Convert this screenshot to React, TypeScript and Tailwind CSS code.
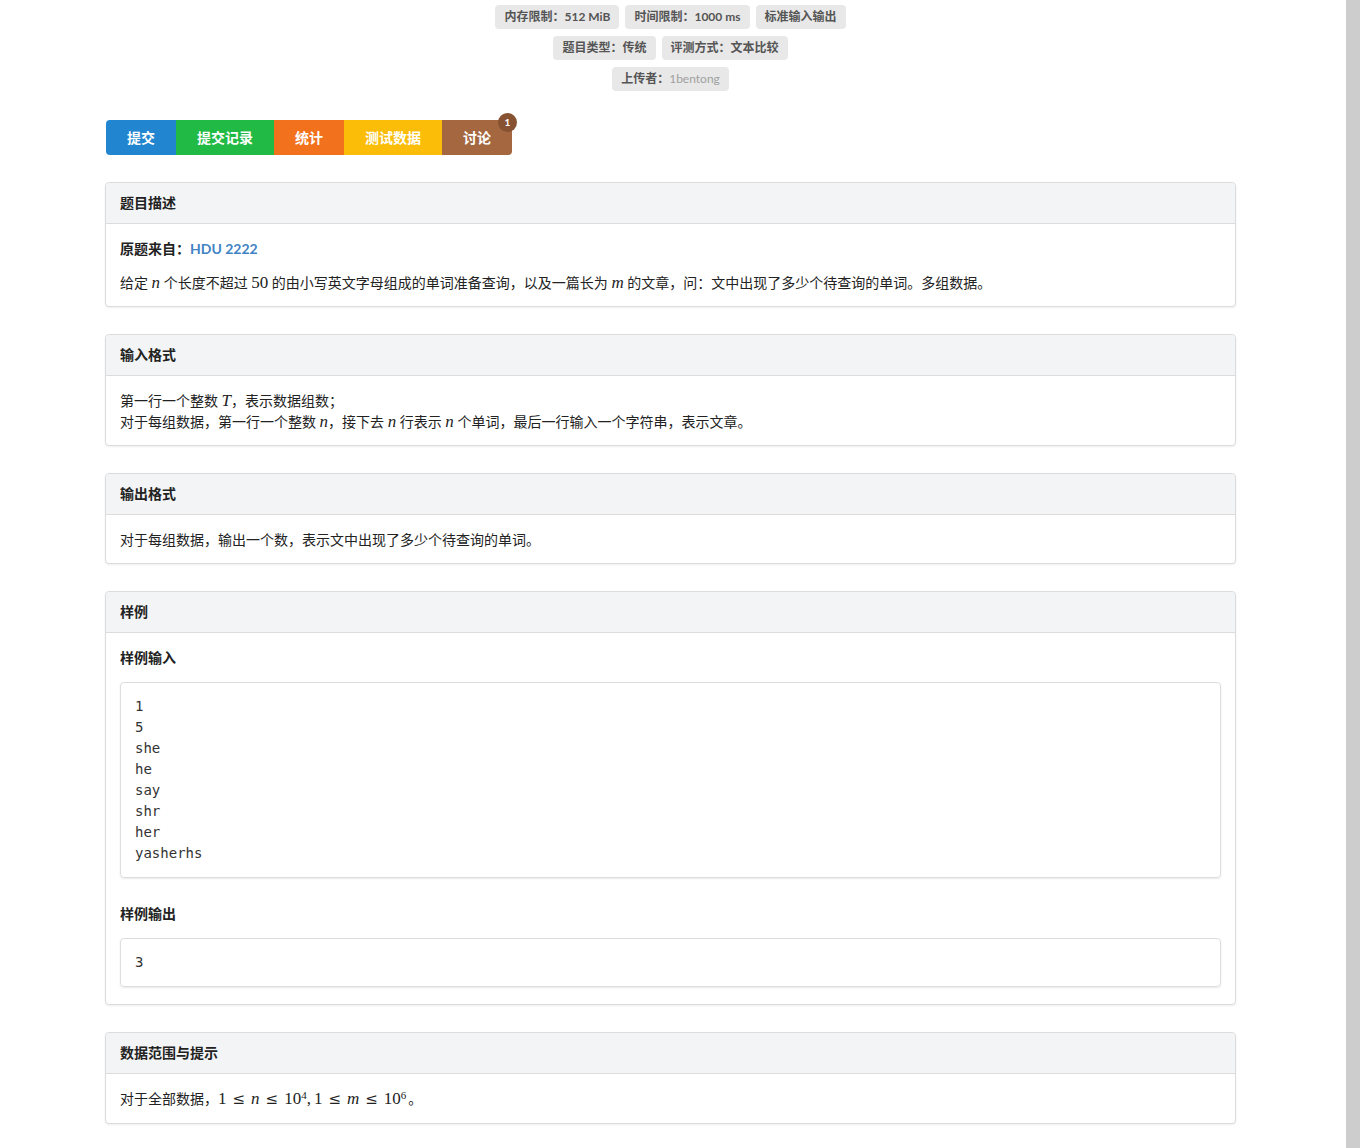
const labelRows = [
  [
    { k: "内存限制：", v: "512 MiB" },
    { k: "时间限制：", v: "1000 ms" },
    { k: "标准输入输出", v: "" },
  ],
  [
    { k: "题目类型：", v: "传统" },
    { k: "评测方式：", v: "文本比较" },
  ],
];

const tabs = [
  { label: "提交", cls: "bg-[#2185d0] rounded-l-[4px]" },
  { label: "提交记录", cls: "bg-[#21ba45]" },
  { label: "统计", cls: "bg-[#f2711c]" },
  { label: "测试数据", cls: "bg-[#fbbd08]" },
  { label: "讨论", cls: "bg-[#a5673f] rounded-r-[4px]" },
];

const sampleInput = ["1", "5", "she", "he", "say", "shr", "her", "yasherhs"];

function M({ children }: { children: React.ReactNode }) {
  return (
    <span className="font-['Liberation_Serif',serif] text-[17px] italic">
      {children}
    </span>
  );
}

function N({ children }: { children: React.ReactNode }) {
  return (
    <span className="font-['Liberation_Serif',serif] text-[17px]">
      {children}
    </span>
  );
}

function Le() {
  return (
    <span className="mx-[6px] font-['DejaVu_Serif',serif] text-[15px]">≤</span>
  );
}

function Card({
  title,
  children,
}: {
  title: string;
  children: React.ReactNode;
}) {
  return (
    <div className="rounded-[4px] border border-[#dcdcdd] bg-white shadow-[0_1px_2px_rgba(34,36,38,0.08)]">
      <div className="rounded-t-[4px] border-b border-[#dcdcdd] bg-[#f3f4f5] px-[14px] py-[10px] text-[14px] font-bold leading-[20px] text-[#222]">
        {title}
      </div>
      <div className="px-[14px] pb-[13px] pt-[14px] text-[14px] leading-[21px] text-[#222]">
        {children}
      </div>
    </div>
  );
}

function Pre({ lines }: { lines: string[] }) {
  return (
    <div className="rounded-[4px] border border-[#dedede] px-[14px] py-[13px] font-['DejaVu_Sans_Mono',monospace] text-[14px] leading-[21px] text-[#333] shadow-[0_1px_2px_rgba(34,36,38,0.1)]">
      {lines.map((l, i) => (
        <div key={i}>{l}</div>
      ))}
    </div>
  );
}

export default function App() {
  return (
    <div className="flex min-h-[1148px] bg-white font-['Lato','Noto_Sans_CJK_SC',sans-serif]">
      <div className="flex-1">
        <div className="ml-[105px] w-[1131px] pt-[5px] pb-[23px]">
          <div className="flex flex-col items-center gap-[7px]">
            {labelRows.map((row, i) => (
              <div key={i} className="flex gap-[6px]">
                {row.map((l) => (
                  <span
                    key={l.k}
                    className="flex h-[24px] items-center rounded-[4px] bg-[#e8e8e8] px-[9px] text-[12px] font-bold text-[#555]"
                  >
                    {l.k}
                    {l.v}
                  </span>
                ))}
              </div>
            ))}
            <div className="flex">
              <span className="flex h-[24px] items-center rounded-[4px] bg-[#e8e8e8] px-[9px] text-[12px] font-bold text-[#555]">
                上传者：
                <span className="font-normal text-[#a0a0a0]">1bentong</span>
              </span>
            </div>
          </div>

          <div className="mt-[29px] flex pl-[1px]">
            {tabs.map((t) => (
              <div
                key={t.label}
                className={`relative flex h-[35px] items-center px-[21px] text-[14px] font-bold text-white ${t.cls}`}
              >
                {t.label}
                {t.label === "讨论" && (
                  <span className="absolute -right-[5px] -top-[7px] flex h-[19px] w-[19px] items-center justify-center rounded-full bg-[#875232] text-[10px] font-bold text-white">
                    1
                  </span>
                )}
              </div>
            ))}
          </div>

          <div className="mt-[27px] flex flex-col gap-[27px]">
            <Card title="题目描述">
              <p className="font-bold">
                原题来自：<span className="text-[#4183c4]">HDU 2222</span>
              </p>
              <p className="mt-[13px]">
                给定 <M>n</M> 个长度不超过 <N>50</N> 的由小写英文字母组成的单词准备查询，以及一篇长为 <M>m</M> 的文章，问：文中出现了多少个待查询的单词。多组数据。
              </p>
            </Card>

            <Card title="输入格式">
              <p>
                第一行一个整数 <M>T</M>，表示数据组数；
              </p>
              <p>
                对于每组数据，第一行一个整数 <M>n</M>，接下去 <M>n</M> 行表示 <M>n</M> 个单词，最后一行输入一个字符串，表示文章。
              </p>
            </Card>

            <Card title="输出格式">
              <p>对于每组数据，输出一个数，表示文中出现了多少个待查询的单词。</p>
            </Card>

            <Card title="样例">
              <p className="font-bold">样例输入</p>
              <div className="mt-[14px]">
                <Pre lines={sampleInput} />
              </div>
              <p className="mt-[25px] font-bold">样例输出</p>
              <div className="mb-[4px] mt-[14px]">
                <Pre lines={["3"]} />
              </div>
            </Card>

            <Card title="数据范围与提示">
              <p className="flex items-baseline">
                对于全部数据，
                <N>1</N>
                <Le />
                <M>n</M>
                <Le />
                <N>
                  10<sup className="text-[11px]">4</sup>,
                </N>
                <span className="ml-[3px]" />
                <N>1</N>
                <Le />
                <M>m</M>
                <Le />
                <N>
                  10<sup className="text-[11px]">6</sup>
                </N>
                <span className="ml-[2px]">。</span>
              </p>
            </Card>
          </div>
        </div>
      </div>
      <div className="w-[14px] shrink-0 bg-[#cdcdcd]" />
    </div>
  );
}
